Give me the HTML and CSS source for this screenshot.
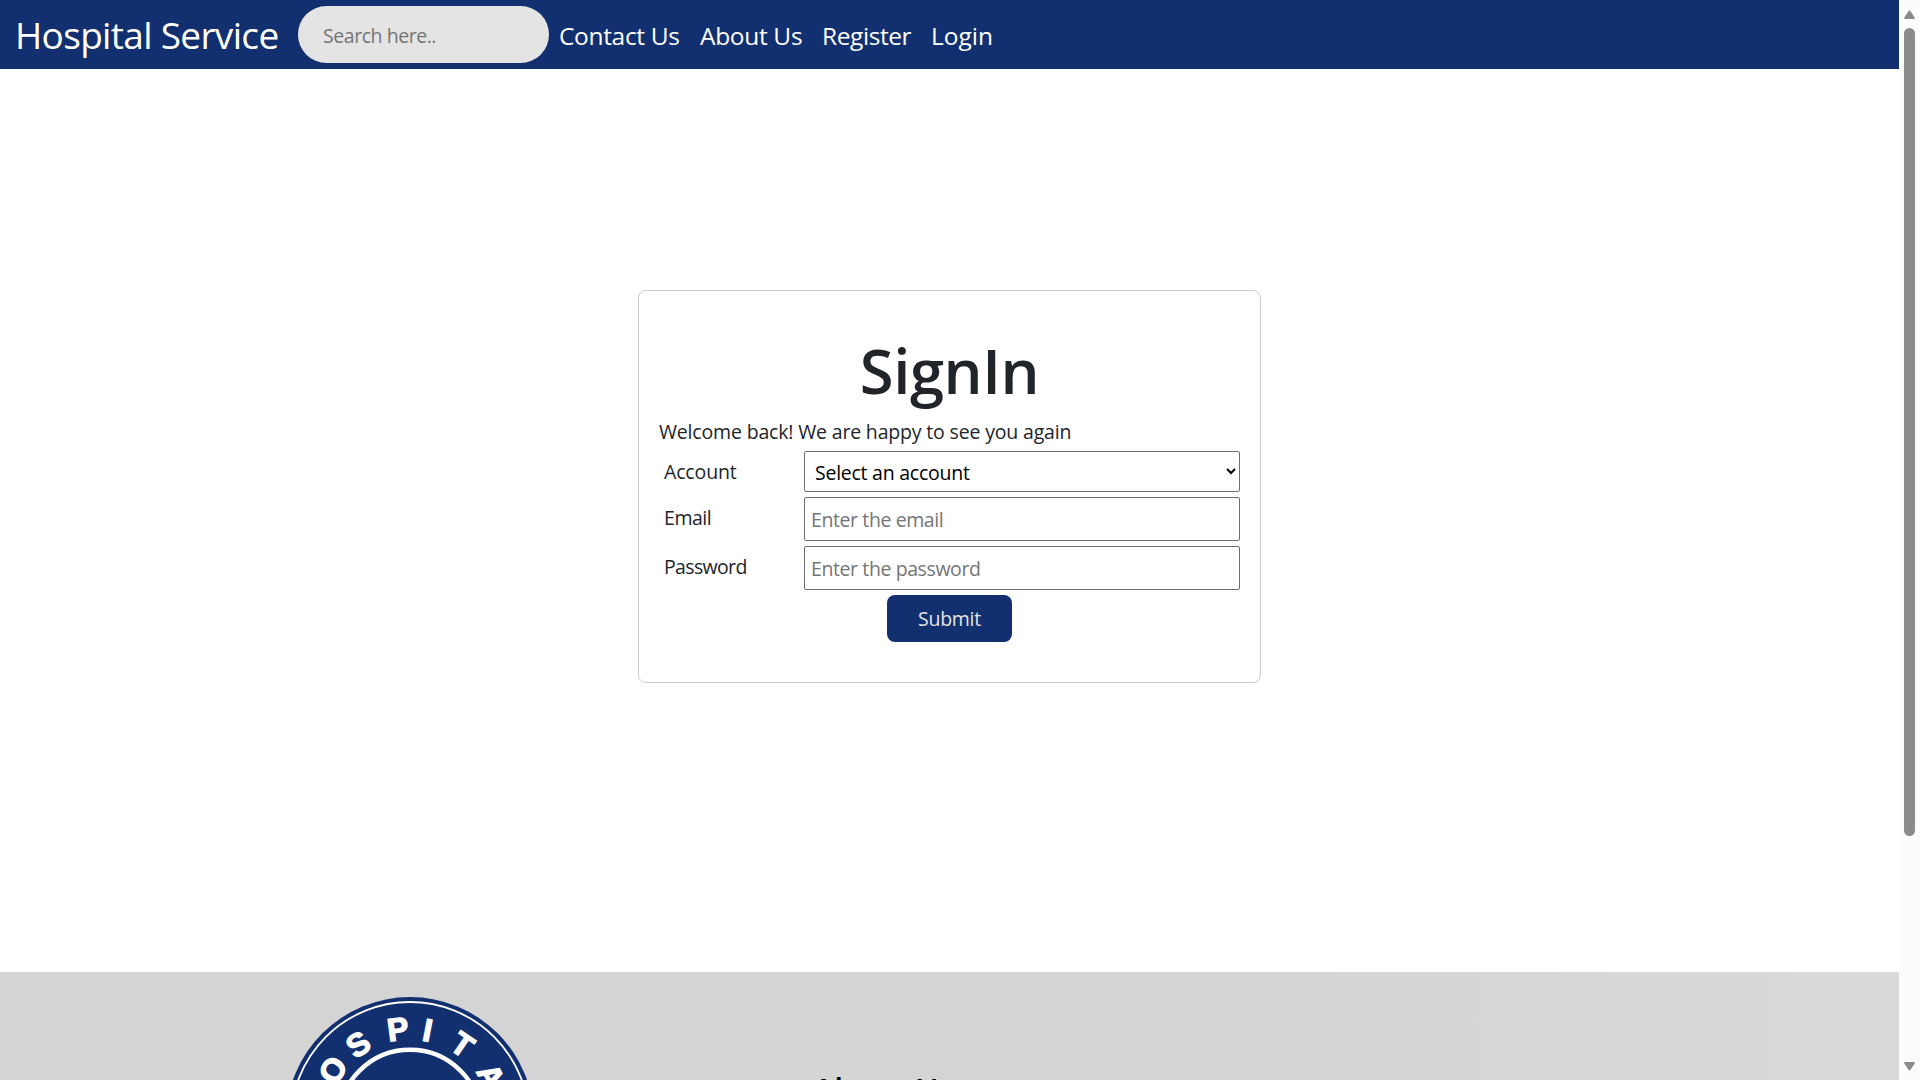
FILE: index.html
```html
<!DOCTYPE html>
<html lang="en">
<head>
<meta charset="utf-8">
<title>Hospital Service</title>
<link rel="stylesheet" href="styles.css">
</head>
<body>
<div class="page">
  <header class="navbar">
    <a class="brand">Hospital Service</a>
    <input class="search" type="text" placeholder="Search here..">
    <nav class="links">
      <a class="contact">Contact Us</a>
      <a class="about">About Us</a>
      <a class="register">Register</a>
      <a class="login">Login</a>
    </nav>
  </header>
  <main class="main">
    <form class="card">
      <h1>SignIn</h1>
      <p class="welcome">Welcome back! We are happy to see you again</p>
      <div class="fields">
        <label class="account">Account</label>
        <select><option>Select an account</option></select>
        <label>Email</label>
        <input type="email" placeholder="Enter the email">
        <label class="password">Password</label>
        <input type="password" placeholder="Enter the password">
      </div>
      <button type="button">Submit</button>
    </form>
  </main>
  <footer class="footer">
    <svg class="logo" width="248" height="248" viewBox="-124 -124 248 248">
      <circle r="124" fill="#12306f"/>
      <circle r="119" fill="none" stroke="#fff" stroke-width="1.8"/>
      <circle r="71.3" fill="none" stroke="#fff" stroke-width="4.4"/>
      <g class="ring">
        <text y="-81.5" transform="rotate(-82)">H</text>
        <text y="-81.5" transform="rotate(-56.5)">O</text>
        <text y="-81.5" transform="rotate(-34)">S</text>
        <text y="-81.5" transform="rotate(-7.5)">P</text>
        <text y="-81.5" transform="rotate(11)">I</text>
        <text y="-81.5" transform="rotate(34.5)">T</text>
        <text y="-81.5" transform="rotate(61)">A</text>
        <text y="-81.5" transform="rotate(85)">L</text>
      </g>
    </svg>
    <h2>About Us</h2>
  </footer>
</div>
<div class="scrollbar">
  <svg width="11" height="9"><path d="M5.5 .5Q6 .5 6.5 1.2L10.7 7.5Q11 9 10 9H1Q0 9 .3 7.5L4.5 1.2Q5 .5 5.5 .5Z" fill="#8b8b8b"/></svg>
  <div class="thumb"></div>
  <svg width="11" height="9"><path d="M5.5 8.5Q6 8.5 6.5 7.8L10.7 1.5Q11 0 10 0H1Q0 0 .3 1.5L4.5 7.8Q5 8.5 5.5 8.5Z" fill="#8b8b8b"/></svg>
</div>
</body>
</html>
```
FILE: styles.css
```css
* { box-sizing: border-box; }

body {
  margin: 0;
  height: 1080px;
  display: flex;
  overflow: hidden;
  background: #fff;
  color: #212529;
  font: 19.5px/30px "Open Sans", sans-serif;
}

.page {
  width: 1899px;
  height: 1080px;
  overflow: hidden;
}

.navbar {
  height: 69px;
  display: flex;
  align-items: center;
  padding-left: 15px;
  background: #12306f;
  color: #fff;
}

.brand {
  width: 283px;
  font-size: 37px;
  line-height: 50px;
  letter-spacing: -0.68px;
}

.search {
  width: 251px;
  height: 57px;
  padding: 2px 25px 0;
  border: 0;
  border-radius: 29px;
  background: #e4e4e4;
  font: 19.5px "Open Sans", sans-serif;
  letter-spacing: -0.45px;
}

::placeholder { color: #757575; }

.links {
  display: flex;
  padding: 2px 0 0 10px;
  font-size: 24.5px;
  letter-spacing: -0.33px;
}

.contact { width: 141px; }
.about { width: 122px; }
.register { width: 109px; letter-spacing: -0.42px; }
.login { letter-spacing: 0; }

.main {
  height: 903px;
  padding-top: 221px;
}

.card {
  width: 623px;
  height: 393px;
  margin: 0 auto;
  padding: 53px 20px 0;
  border: 1px solid #cdcdcd;
  border-radius: 8px;
}

h1 {
  margin: 0 0 20px;
  font-size: 61.5px;
  font-weight: 600;
  line-height: 53px;
  text-align: center;
  letter-spacing: -0.4px;
}

.welcome {
  margin: 0 0 4px;
  letter-spacing: -0.17px;
}

.fields {
  display: grid;
  grid-template-columns: 140px 436px;
  grid-template-rows: 41px 44px 44px;
  gap: 5px;
}

.fields label {
  display: flex;
  align-items: center;
  padding: 0 0 3px 5px;
  letter-spacing: -0.45px;
}

.fields .account { padding-bottom: 0; letter-spacing: -0.15px; }
.fields .password { letter-spacing: -0.65px; }

.fields select,
.fields input {
  border: 1px solid #6f6f6f;
  border-radius: 2px;
  background: #fff;
  font: 19.5px "Open Sans", sans-serif;
  letter-spacing: -0.4px;
}

.fields select {
  padding: 2px 0 0 6px;
  color: #000;
  letter-spacing: -0.25px;
}

.fields input { padding: 1px 6px 0; }

button {
  display: block;
  width: 125px;
  height: 47px;
  margin: 5px auto 0;
  border: 0;
  border-radius: 8px;
  background: #12306f;
  color: #e4e4e4;
  font: 19.5px "Open Sans", sans-serif;
  letter-spacing: -0.25px;
}

.footer {
  height: 320px;
  display: flex;
  align-items: flex-start;
  padding: 25px 0 0 286px;
  background: linear-gradient(90deg, #d4d4d4 65%, #dadada);
}

.ring {
  fill: #fff;
  stroke: #fff;
  stroke-width: 1.3;
  font: bold 32px "Liberation Sans", sans-serif;
  text-anchor: middle;
}

h2 {
  margin: 74px 0 0 279px;
  color: #000;
  font-size: 32px;
  font-weight: 600;
  line-height: 38px;
}

.scrollbar {
  width: 21px;
  display: flex;
  flex-direction: column;
  align-items: center;
  padding: 10px 0 9px;
  background: #fcfcfc;
}

.thumb {
  width: 11px;
  height: 808px;
  margin: 9px 0 226px;
  border-radius: 6px;
  background: #8b8b8b;
}
```
